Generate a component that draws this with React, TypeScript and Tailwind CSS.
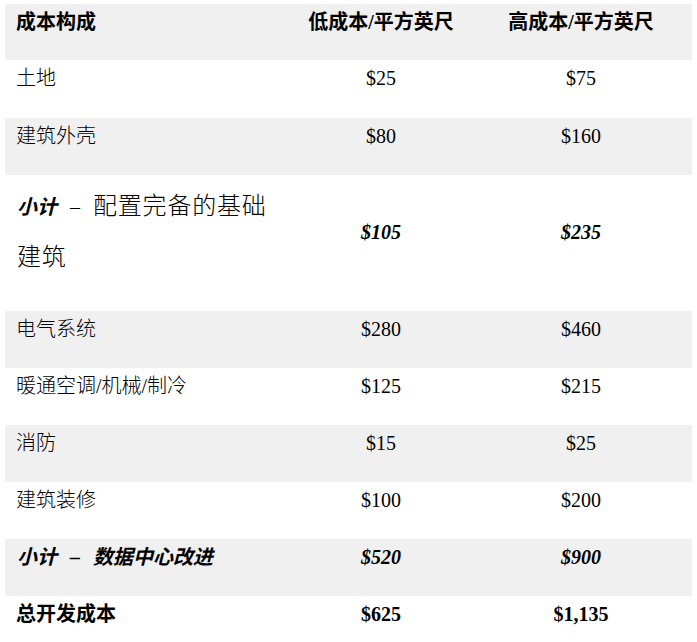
type Row = {
  label: string;
  low: string;
  high: string;
  kind?: "normal" | "subtotal" | "total";
};

const rows: Row[] = [
  { label: "土地", low: "$25", high: "$75" },
  { label: "建筑外壳", low: "$80", high: "$160" },
  { label: "配置完备的基础建筑", low: "$105", high: "$235", kind: "subtotal" },
  { label: "电气系统", low: "$280", high: "$460" },
  { label: "暖通空调/机械/制冷", low: "$125", high: "$215" },
  { label: "消防", low: "$15", high: "$25" },
  { label: "建筑装修", low: "$100", high: "$200" },
  { label: "数据中心改进", low: "$520", high: "$900", kind: "total" },
  { label: "总开发成本", low: "$625", high: "$1,135" },
];

const font = { fontFamily: '"Liberation Serif", "Noto Sans CJK SC", serif' };

function Dash() {
  return <span className="mx-[13px] inline-block text-[20px]">–</span>;
}

export default function App() {
  return (
    <div className="min-h-screen bg-white px-[5px] pt-[4px] text-black" style={font}>
      {/* header */}
      <div className="grid h-[56px] grid-cols-[276px_200px_211px] items-start bg-[#f0f0f0] pt-[6px] text-[20px] font-bold leading-[24px]">
        <div className="pl-[11px]">成本构成</div>
        <div className="text-center">低成本/平方英尺</div>
        <div className="pr-[11px] text-center">高成本/平方英尺</div>
      </div>

      {rows.map((r, i) => {
        const grey = i % 2 === 1;
        const bg = grey ? "bg-[#f0f0f0]" : "bg-white";
        const last = i === rows.length - 1;

        if (r.kind === "subtotal") {
          return (
            <div
              key={r.label}
              className={`grid h-[136px] grid-cols-[276px_200px_211px] pt-[6px] pb-[30px] ${bg}`}
            >
              <div className="pl-[12px] pr-[2px] text-[24px] leading-[50px] font-light">
                <span className="text-[20px] font-bold italic">小计</span>
                <Dash />
                <span className="tracking-[0.8px]">{r.label}</span>
              </div>
              <div className="flex items-center justify-center text-[20px] font-bold italic">{r.low}</div>
              <div className="flex items-center justify-center pr-[11px] text-[20px] font-bold italic">{r.high}</div>
            </div>
          );
        }

        if (r.kind === "total") {
          return (
            <div
              key={r.label}
              className={`grid h-[57px] grid-cols-[276px_200px_211px] items-start pt-[6px] text-[20px] font-bold italic leading-[24px] ${bg}`}
            >
              <div className="pl-[12px]">
                小计
                <Dash />
                {r.label}
              </div>
              <div className="text-center">{r.low}</div>
              <div className="pr-[11px] text-center">{r.high}</div>
            </div>
          );
        }

        const style = last ? "font-bold" : "font-light";

        return (
          <div
            key={r.label}
            className={`grid ${i === 0 ? "h-[58px]" : "h-[57px]"} grid-cols-[276px_200px_211px] items-start pt-[6px] text-[20px] leading-[24px] ${bg} ${style}`}
          >
            <div className="pl-[11px]">{r.label}</div>
            <div className={`text-center ${last ? "" : "font-normal"}`}>{r.low}</div>
            <div className={`pr-[11px] text-center ${last ? "" : "font-normal"}`}>{r.high}</div>
          </div>
        );
      })}
    </div>
  );
}
